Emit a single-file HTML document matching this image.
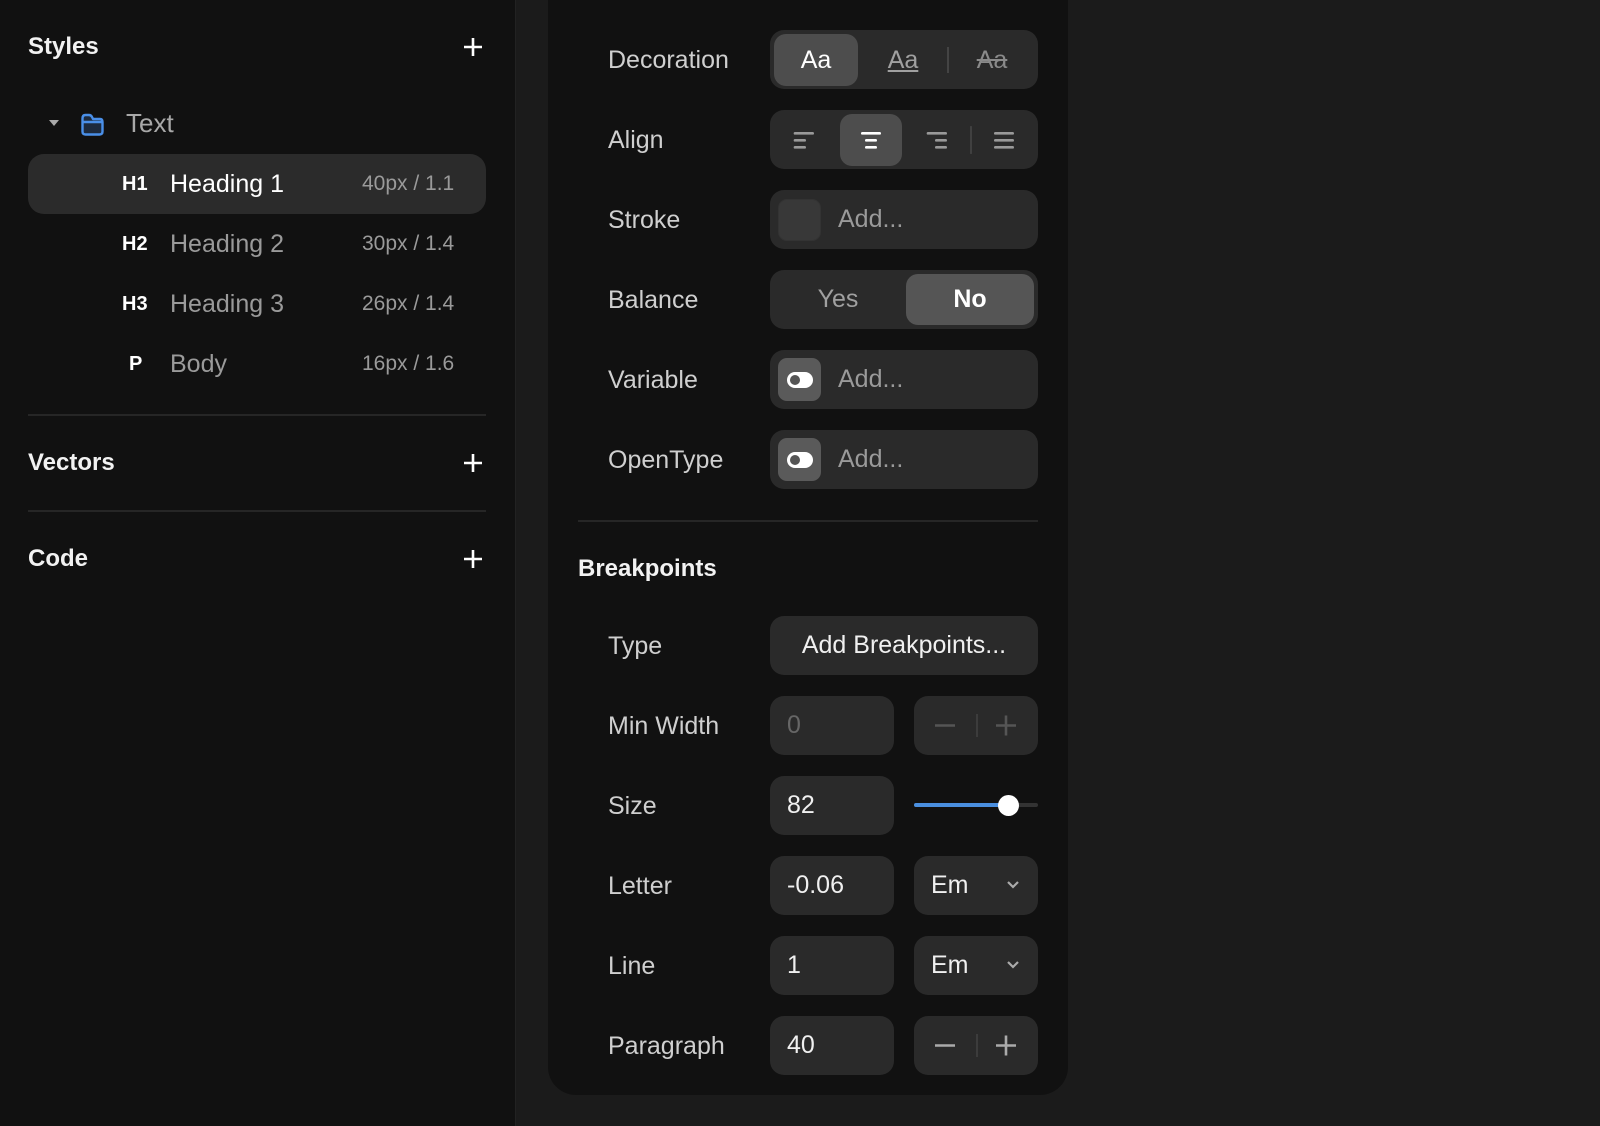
<!DOCTYPE html>
<html><head><meta charset="utf-8">
<style>
*{margin:0;padding:0;box-sizing:border-box}
body{width:1600px;height:1126px;background:#1b1b1b;font-family:"Liberation Sans",sans-serif;position:relative;overflow:hidden;color:#fff}
.a{position:absolute}
.side{left:0;top:0;width:516px;height:1126px;background:#111;border-right:1px solid #222}
.panel{left:548px;top:-30px;width:520px;height:1125px;background:#111;border-radius:0 0 28px 28px}
.ttl{font-weight:bold;font-size:24px;color:#f2f2f2}
.plus{width:20px;height:20px}
.lab{font-size:25px;color:#cfcfcf;line-height:60px;left:608px}
.ctl{background:#2a2a2a;border-radius:14px;height:59px}
.sep{height:2px;background:#262626}
.row{font-size:25px;line-height:60px}
.tag{font-weight:bold;font-size:20px;color:#fff}
.sz{color:#9a9a9a;font-size:21px}
.c{display:flex;align-items:center;justify-content:center}
.val{font-size:25px;color:#f0f0f0;line-height:59px;padding-left:17px}
.add{line-height:59px;font-size:25px;color:#9a9a9a}
</style></head><body>
<div class="a side"></div>
<div class="a panel"></div>

<!-- Sidebar -->
<div class="a ttl" style="left:28px;top:33px">Styles</div>
<svg class="a plus" style="left:463px;top:37px" viewBox="0 0 20 20"><path d="M10 1V19M1 10H19" stroke="#fff" stroke-width="2.6"/></svg>
<svg class="a" style="left:49px;top:120px" width="10" height="7" viewBox="0 0 10 7"><path d="M0 0H10L5 6Z" fill="#aaa"/></svg>
<svg class="a" style="left:80px;top:112px" width="25" height="25" viewBox="0 0 25 25"><path d="M2.5 6.5Q2.5 3 5.5 3H9Q11 3 12 5L13 7H20Q22.5 7 22.5 10V19.5Q22.5 22.5 19.5 22.5H5.5Q2.5 22.5 2.5 19.5Z M2.5 10H22.5" fill="#1d2a3d" stroke="#4a8fe8" stroke-width="2.4" stroke-linejoin="round"/></svg>
<div class="a" style="left:126px;top:108px;font-size:26px;color:#a8a8a8">Text</div>

<div class="a" style="left:28px;top:154px;width:458px;height:60px;background:#2b2b2b;border-radius:16px"></div>
<div class="a row tag" style="left:122px;top:154px">H1</div>
<div class="a row" style="left:170px;top:154px;color:#fff">Heading 1</div>
<div class="a row sz" style="left:362px;top:154px">40px / 1.1</div>

<div class="a row tag" style="left:122px;top:214px">H2</div>
<div class="a row" style="left:170px;top:214px;color:#9a9a9a">Heading 2</div>
<div class="a row sz" style="left:362px;top:214px">30px / 1.4</div>

<div class="a row tag" style="left:122px;top:274px">H3</div>
<div class="a row" style="left:170px;top:274px;color:#9a9a9a">Heading 3</div>
<div class="a row sz" style="left:362px;top:274px">26px / 1.4</div>

<div class="a row tag" style="left:129px;top:334px">P</div>
<div class="a row" style="left:170px;top:334px;color:#9a9a9a">Body</div>
<div class="a row sz" style="left:362px;top:334px">16px / 1.6</div>

<div class="a sep" style="left:28px;top:414px;width:458px"></div>
<div class="a ttl" style="left:28px;top:449px">Vectors</div>
<svg class="a plus" style="left:463px;top:453px" viewBox="0 0 20 20"><path d="M10 1V19M1 10H19" stroke="#fff" stroke-width="2.6"/></svg>
<div class="a sep" style="left:28px;top:510px;width:458px"></div>
<div class="a ttl" style="left:28px;top:545px">Code</div>
<svg class="a plus" style="left:463px;top:549px" viewBox="0 0 20 20"><path d="M10 1V19M1 10H19" stroke="#fff" stroke-width="2.6"/></svg>

<!-- Panel rows -->
<div class="a lab" style="top:30px">Decoration</div>
<div class="a ctl" style="left:770px;top:30px;width:268px"></div>
<div class="a c" style="left:774px;top:34px;width:84px;height:52px;background:#4d4d4d;border-radius:12px;font-size:25px">Aa</div>
<div class="a c" style="left:860px;top:34px;width:86px;height:52px;font-size:25px;color:#a0a0a0;text-decoration:underline">Aa</div>
<div class="a" style="left:947px;top:47px;width:2px;height:26px;background:#444"></div>
<div class="a c" style="left:950px;top:34px;width:84px;height:52px;font-size:25px;color:#8a8a8a;text-decoration:line-through">Aa</div>

<div class="a lab" style="top:110px">Align</div>
<div class="a ctl" style="left:770px;top:110px;width:268px"></div>
<div class="a" style="left:840px;top:114px;width:62px;height:52px;background:#4d4d4d;border-radius:12px"></div>
<svg class="a" style="left:760px;top:100px" width="280" height="80" viewBox="0 0 840 240">
<g stroke-linecap="round" stroke-width="8">
<path d="M105 100H158M105 121H134M105 142H134" stroke="#999"/>
<path d="M307 100H359M319 121H347M319 142H347" stroke="#fff"/>
<path d="M504 100H557M529 121H557M529 142H557" stroke="#999"/>
<path d="M706 100H758M706 121H758M706 142H758" stroke="#999"/>
<path d="M633 80V160" stroke="#444" stroke-width="5"/>
</g></svg>

<div class="a lab" style="top:190px">Stroke</div>
<div class="a ctl" style="left:770px;top:190px;width:268px"></div>
<div class="a" style="left:778px;top:199px;width:43px;height:42px;background:#383838;border-radius:9px;border:1px solid #333"></div>
<div class="a add" style="left:838px;top:190px">Add...</div>

<div class="a lab" style="top:270px">Balance</div>
<div class="a ctl" style="left:770px;top:270px;width:268px"></div>
<div class="a c" style="left:772px;top:274px;width:132px;height:51px;font-size:25px;color:#a0a0a0">Yes</div>
<div class="a c" style="left:906px;top:274px;width:128px;height:51px;background:#555;border-radius:12px;font-size:25px;font-weight:bold">No</div>

<div class="a lab" style="top:350px">Variable</div>
<div class="a ctl" style="left:770px;top:350px;width:268px"></div>
<div class="a c" style="left:778px;top:358px;width:43px;height:43px;background:#5a5a5a;border-radius:9px"><svg width="26" height="16" viewBox="0 0 26 16"><rect x="0" y="0" width="26" height="16" rx="8" fill="#fff"/><circle cx="8" cy="8" r="5" fill="#555"/></svg></div>
<div class="a add" style="left:838px;top:350px">Add...</div>

<div class="a lab" style="top:430px">OpenType</div>
<div class="a ctl" style="left:770px;top:430px;width:268px"></div>
<div class="a c" style="left:778px;top:438px;width:43px;height:43px;background:#5a5a5a;border-radius:9px"><svg width="26" height="16" viewBox="0 0 26 16"><rect x="0" y="0" width="26" height="16" rx="8" fill="#fff"/><circle cx="8" cy="8" r="5" fill="#555"/></svg></div>
<div class="a add" style="left:838px;top:430px">Add...</div>

<div class="a sep" style="left:578px;top:520px;width:460px"></div>
<div class="a" style="left:578px;top:555px;font-size:24px;font-weight:bold;color:#f2f2f2">Breakpoints</div>

<div class="a lab" style="top:616px">Type</div>
<div class="a ctl c" style="left:770px;top:616px;width:268px;font-size:25px;color:#f0f0f0">Add Breakpoints...</div>

<div class="a lab" style="top:696px">Min Width</div>
<div class="a ctl val" style="left:770px;top:696px;width:124px;color:#666">0</div>
<div class="a ctl" style="left:914px;top:696px;width:124px"></div>
<svg class="a" style="left:914px;top:696px" width="124" height="59" viewBox="0 0 124 59"><path d="M21 29.5H41M92 19.5V39.5M82 29.5H102" stroke="#555" stroke-width="2.6"/><path d="M63 18V41" stroke="#3c3c3c" stroke-width="2"/></svg>

<div class="a lab" style="top:776px">Size</div>
<div class="a ctl val" style="left:770px;top:776px;width:124px">82</div>
<div class="a" style="left:914px;top:803px;width:124px;height:4px;background:#333;border-radius:2px"></div>
<div class="a" style="left:914px;top:803px;width:94px;height:4px;background:#4a8fe0;border-radius:2px"></div>
<div class="a" style="left:998px;top:795px;width:21px;height:21px;background:#fff;border-radius:50%"></div>

<div class="a lab" style="top:856px">Letter</div>
<div class="a ctl val" style="left:770px;top:856px;width:124px">-0.06</div>
<div class="a ctl val" style="left:914px;top:856px;width:124px">Em</div>
<svg class="a" style="left:1006px;top:880px" width="14" height="10" viewBox="0 0 14 10"><path d="M2 2L7 7L12 2" fill="none" stroke="#aaa" stroke-width="2.2"/></svg>

<div class="a lab" style="top:936px">Line</div>
<div class="a ctl val" style="left:770px;top:936px;width:124px">1</div>
<div class="a ctl val" style="left:914px;top:936px;width:124px">Em</div>
<svg class="a" style="left:1006px;top:960px" width="14" height="10" viewBox="0 0 14 10"><path d="M2 2L7 7L12 2" fill="none" stroke="#aaa" stroke-width="2.2"/></svg>

<div class="a lab" style="top:1016px">Paragraph</div>
<div class="a ctl val" style="left:770px;top:1016px;width:124px">40</div>
<div class="a ctl" style="left:914px;top:1016px;width:124px"></div>
<svg class="a" style="left:914px;top:1016px" width="124" height="59" viewBox="0 0 124 59"><path d="M21 29.5H41M92 19.5V39.5M82 29.5H102" stroke="#aaa" stroke-width="2.6"/><path d="M63 18V41" stroke="#3c3c3c" stroke-width="2"/></svg>
</body></html>
